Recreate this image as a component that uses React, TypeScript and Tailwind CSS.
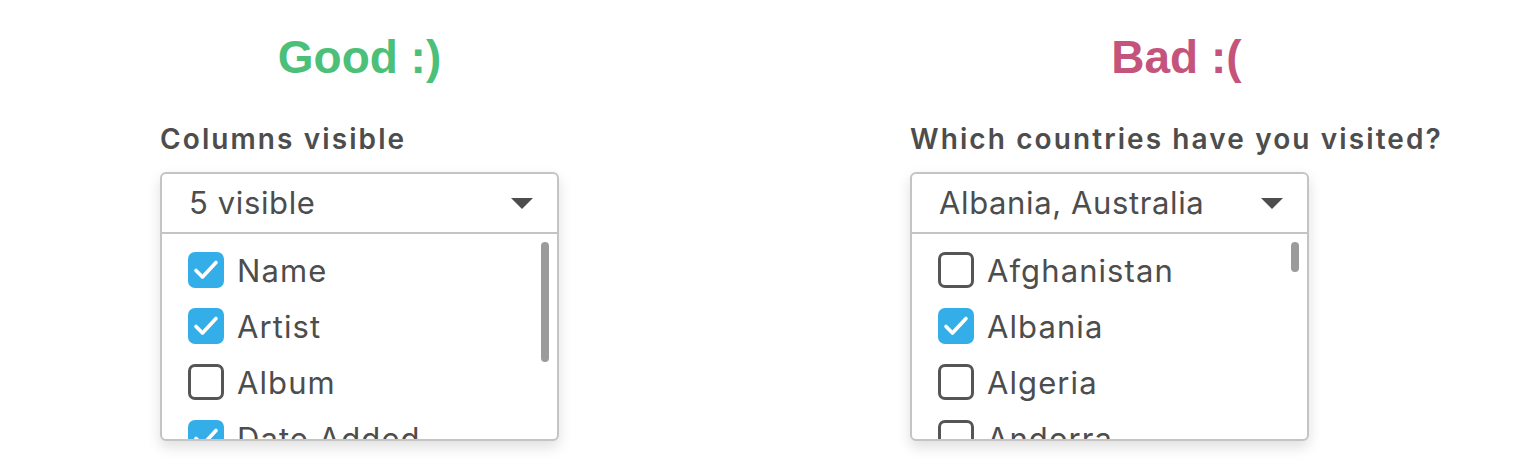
import React from "react";

interface Option {
  label: string;
  checked: boolean;
}

const goodOptions: Option[] = [
  { label: "Name", checked: true },
  { label: "Artist", checked: true },
  { label: "Album", checked: false },
  { label: "Date Added", checked: true },
];

const badOptions: Option[] = [
  { label: "Afghanistan", checked: false },
  { label: "Albania", checked: true },
  { label: "Algeria", checked: false },
  { label: "Andorra", checked: false },
];

function Checkbox({ checked }: { checked: boolean }) {
  if (checked) {
    return (
      <div className="w-9 h-9 shrink-0 rounded-[7px] bg-[#33aee8] flex items-center justify-center">
        <svg width="28" height="28" viewBox="0 0 28 28" fill="none">
          <path d="M4 14.5 L10.5 21 L24 6.5" stroke="white" strokeWidth="3.6" strokeLinecap="round" strokeLinejoin="round" />
        </svg>
      </div>
    );
  }
  return <div className="w-9 h-9 shrink-0 rounded-[7px] border-[3px] border-[#555555] bg-white" />;
}

function MultiSelect({ value, options, thumbHeight }: { value: string; options: Option[]; thumbHeight: number }) {
  return (
    <div className="w-[399px] rounded-[6px] border-2 border-[#c4c4c4] bg-white shadow-[0_6px_14px_rgba(0,0,0,0.13)]">
      <div className="h-[60px] flex items-center justify-between pl-[27px] pr-[24px] border-b-2 border-[#c4c4c4]">
        <span className="text-[31px] tracking-[0.02em] text-[#4d4d4d]">{value}</span>
        <svg width="22" height="11" viewBox="0 0 22 11">
          <path d="M0 0 H22 L11 11 Z" fill="#4d4d4d" />
        </svg>
      </div>
      <div className="relative h-[205px] overflow-hidden pt-[8px]">
        {options.map((o) => (
          <div key={o.label} className="h-14 flex items-center gap-[13px] pl-[26px]">
            <Checkbox checked={o.checked} />
            <span className="text-[31px] tracking-[0.035em] text-[#4d4d4d] leading-none">{o.label}</span>
          </div>
        ))}
        <div
          className="absolute right-[8px] top-[8px] w-[8px] rounded-full bg-[#9b9b9b]"
          style={{ height: thumbHeight }}
        />
      </div>
    </div>
  );
}

function Column({ title, titleColor, label, value, options, thumbHeight }: {
  title: string;
  titleColor: string;
  label: string;
  value: string;
  options: Option[];
  thumbHeight: number;
}) {
  return (
    <div className="flex flex-col items-start">
      <h1
        className={`w-full text-center mt-[34px] text-[46px] leading-none font-bold ${titleColor}`}
        style={{ fontFamily: '"Liberation Sans", Arial, sans-serif' }}
      >
        {title}
      </h1>
      <div className="mt-[46px] text-[28px] leading-[27px] font-semibold tracking-[0.075em] text-[#4d4d4d]">{label}</div>
      <div className="mt-[19px]">
        <MultiSelect value={value} options={options} thumbHeight={thumbHeight} />
      </div>
    </div>
  );
}

export default function App() {
  return (
    <div className="w-[1536px] h-[470px] bg-white flex pl-[160px]" style={{ fontFamily: 'Inter, "Noto Sans", sans-serif' }}>
      <Column
        title="Good :)"
        titleColor="text-[#4cbf78]"
        label="Columns visible"
        value="5 visible"
        options={goodOptions}
        thumbHeight={120}
      />
      <div className="ml-[351px]">
        <Column
          title="Bad :("
          titleColor="text-[#c4547c]"
          label="Which countries have you visited?"
          value="Albania, Australia"
          options={badOptions}
          thumbHeight={30}
        />
      </div>
    </div>
  );
}
